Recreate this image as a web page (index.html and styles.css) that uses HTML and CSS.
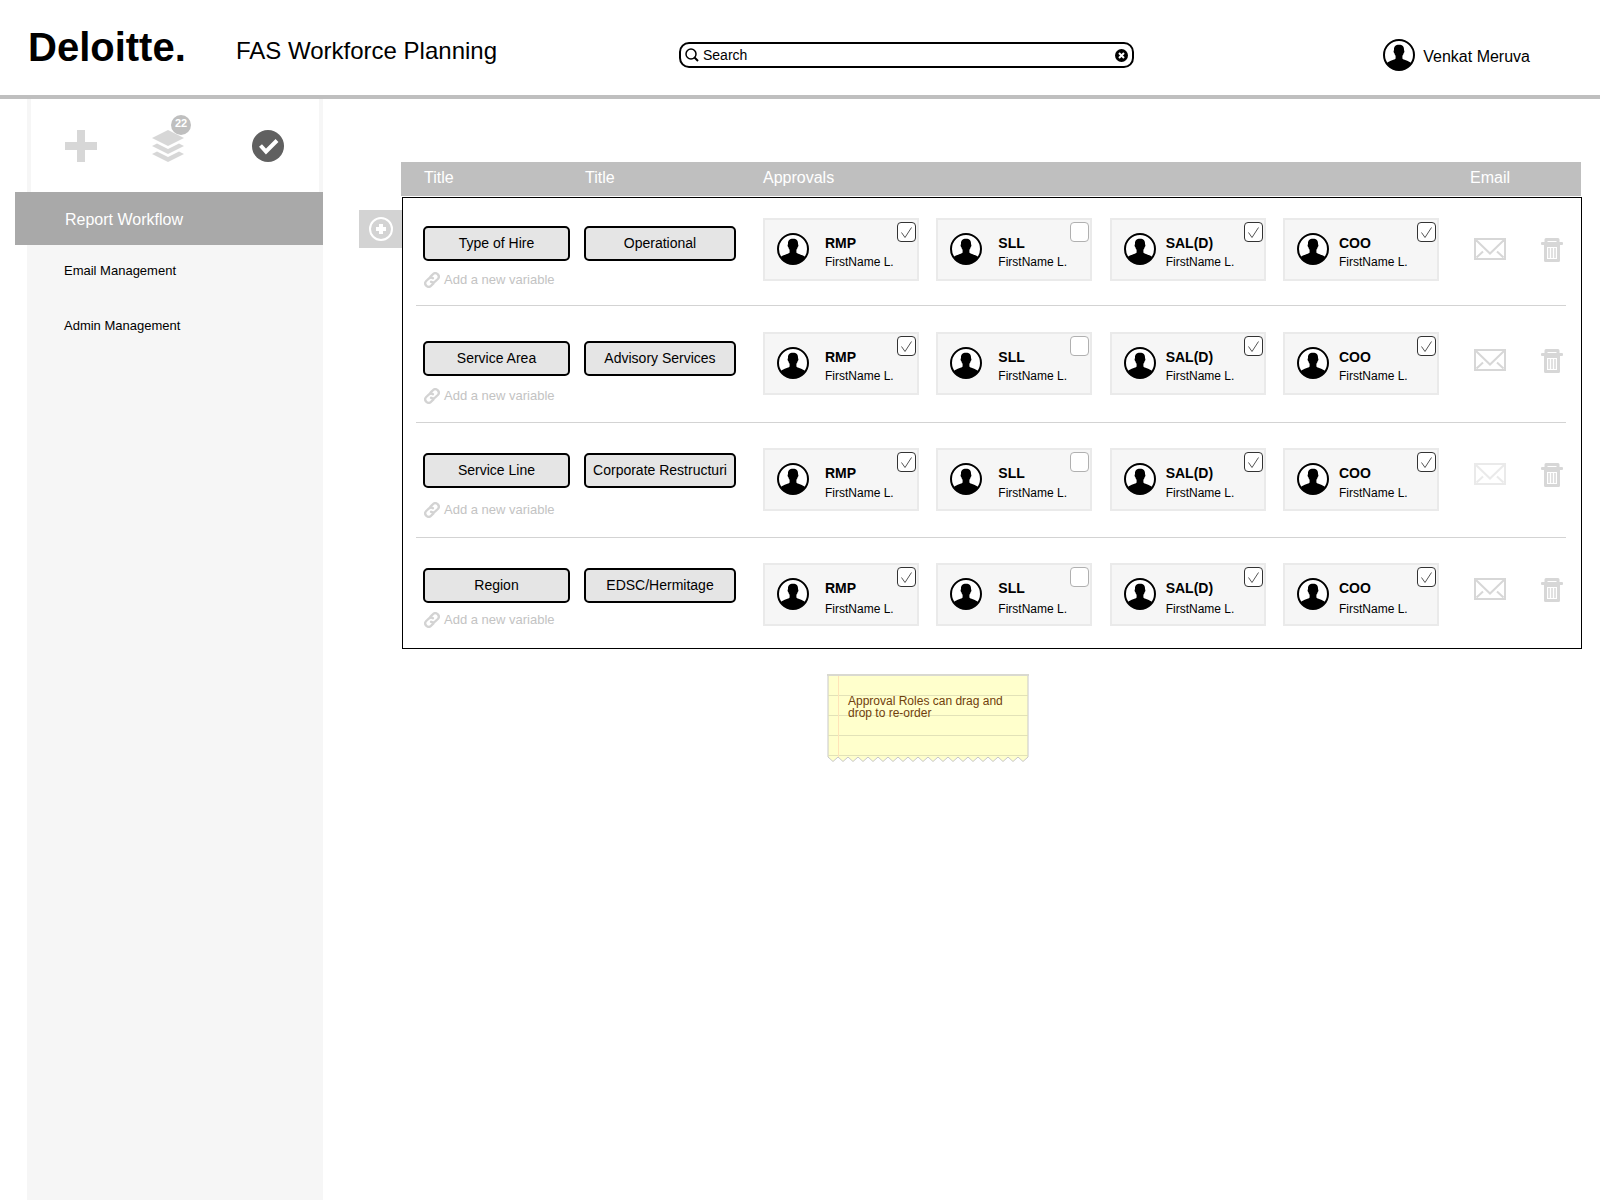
FILE: index.html
```html
<!DOCTYPE html>
<html lang="en">
<head>
<meta charset="utf-8">
<title>FAS Workforce Planning</title>
<link rel="stylesheet" href="styles.css">
</head>
<body>
<svg class="sprite" aria-hidden="true">
  <symbol id="avatar" viewBox="0 0 32 32">
    <circle cx="16" cy="16" r="15" fill="#fff" stroke="#000" stroke-width="2"/>
    <path d="M16 5.800c3.900 0 5.200 2 5 5.400.700.300.500 2.600-.400 3-.200 1.300-.700 2-1.200 2.600v2.600c.7 1.500 5.500 1.700 9.200 4.800A15 15 0 0 1 3.400 24.200c3.700-3.100 8.500-3.300 9.200-4.800v-2.600c-.500-.600-1-1.300-1.200-2.600-.900-.400-1.100-2.700-.400-3C10.800 7.800 12.100 5.800 16 5.800z"/>
  </symbol>
  <symbol id="mail" viewBox="0 0 32 22">
    <path d="M1 1h30v20H1zM2 2l14 13.500L30 2M2.500 19.500l6.500-6M29.500 19.500l-6.500-6" fill="none" stroke="currentColor" stroke-width="2"/>
  </symbol>
  <symbol id="trash" viewBox="0 0 22 24">
    <path d="M5 5V1.500h12V5" fill="none" stroke="currentColor" stroke-width="3" stroke-linejoin="round"/>
    <rect y="4" width="22" height="3" rx="1" fill="currentColor"/>
    <path d="M4.500 7v15.500h13V7" fill="none" stroke="currentColor" stroke-width="3" stroke-linejoin="round"/>
    <path d="M6 8h10" stroke="currentColor" stroke-width="2"/>
    <path d="M8 10v10M11 10v10M14 10v10" stroke="currentColor" stroke-width="1.500"/>
  </symbol>
  <symbol id="chain" viewBox="0 0 16 16">
    <g fill="none" stroke="currentColor" stroke-width="2.300" stroke-linecap="round" stroke-linejoin="round">
      <path d="M6.500 4.500l2.300-2.200c1.500-1.500 3.500-1.300 4.800-.200 1.500 1.500 1.500 3.500.200 4.900L11 9.600c-1.200 1-2.800 1-4 .200"/>
      <path d="M9.500 11.500l-2.300 2.200c-1.500 1.500-3.500 1.300-4.800.200C.9 12.400.9 10.400 2.200 9L5 6.400c1.200-1 2.800-1 4-.200"/>
    </g>
  </symbol>
</svg>

<header class="topbar">
  <div class="brand">Deloitte.</div>
  <h1 class="product">FAS Workforce Planning</h1>
  <form class="search">
    <svg class="search-icon" viewBox="0 0 14 14" aria-hidden="true"><circle cx="6" cy="6" r="5" fill="none" stroke="#000" stroke-width="1.500"/><path d="M9.500 9.500l3.500 3.500" stroke="#000" stroke-width="2"/></svg>
    <input class="search-input" type="text" value="Search" aria-label="Search">
    <button class="icon-button" type="button" aria-label="Clear search">
      <svg class="clear-icon" viewBox="0 0 13 13"><circle cx="6.500" cy="6.500" r="6.500"/><path d="M4 4l5 5M9 4l-5 5" stroke="#fff" stroke-width="2"/></svg>
    </button>
  </form>
  <div class="user"><svg class="avatar"><use href="#avatar"/></svg><span>Venkat Meruva</span></div>
</header>

<div class="layout">
  <aside class="sidebar">
    <div class="tools">
      <button class="icon-button" type="button" aria-label="Add"><svg class="tool-icon" viewBox="0 0 32 32"><path d="M12 0h8v12h12v8H20v12h-8V20H0v-8h12z" fill="currentColor"/></svg></button>
      <button class="icon-button" type="button" aria-label="Layers">
        <svg class="tool-icon" viewBox="0 0 32 32"><path d="M16 0l16 8-16 8L0 8zM0 16l5-2.500 11 5.500 11-5.500 5 2.500-16 8zM0 24l5-2.500L16 27l11-5.500 5 2.500-16 8z" fill="currentColor"/></svg>
        <span class="badge">22</span>
      </button>
      <button class="icon-button" type="button" aria-label="Approve"><svg class="tool-icon" viewBox="0 0 32 32"><circle cx="16" cy="16" r="16" fill="#606060"/><path d="M8.500 15.500l5.500 6L25 10.500" fill="none" stroke="#fff" stroke-width="4" stroke-linejoin="miter"/></svg></button>
    </div>
    <nav class="menu">
      <a class="menu-link menu-link-active" href="#">Report Workflow</a>
      <a class="menu-link" href="#">Email Management</a>
      <a class="menu-link" href="#">Admin Management</a>
    </nav>
  </aside>

  <main class="content">
    <button class="add-row" type="button" aria-label="Add row"><svg class="add-icon" viewBox="0 0 24 24"><circle cx="12" cy="12" r="11" fill="none" stroke="#fff" stroke-width="2"/><path d="M12 7v10M7 12h10" stroke="#fff" stroke-width="4"/></svg></button>
    <div class="board">
      <table class="workflow">
        <thead class="head">
          <tr class="head-row"><th>Title</th><th>Title</th><th>Approvals</th><th>Email</th></tr>
        </thead>
        <tbody class="rows" id="rows"></tbody>
      </table>
      <div class="note">
        <svg class="note-paper" viewBox="0 0 202 88" aria-hidden="true">
          <path d="M1 1H201V83l-5 4.500l-5-4.500l-5 4.500l-5-4.500l-5 4.500l-5-4.500l-5 4.500l-5-4.500l-5 4.500l-5-4.500l-5 4.500l-5-4.500l-5 4.500l-5-4.500l-5 4.500l-5-4.500l-5 4.500l-5-4.500l-5 4.500l-5-4.500l-5 4.500l-5-4.500l-5 4.500l-5-4.500l-5 4.500l-5-4.500l-5 4.500l-5-4.500l-5 4.500l-5-4.500l-5 4.500l-5-4.500l-5 4.500l-5-4.500l-5 4.500l-5-4.500l-5 4.500l-5-4.500l-5 4.500l-5-4.500z" fill="#ffffcc" stroke="#c8c8c8"/>
          <path d="M1 21.500h200M1 41.500h200M1 61.500h200M1 81.500h200" stroke="#e2e2b8"/>
          <path d="M11.500 2v81" stroke="#ffe3b8"/>
          <path d="M0 1h202" stroke="#d9d9d0" stroke-width="2"/>
        </svg>
        <p class="note-text">Approval Roles can drag and drop to re-order</p>
      </div>
    </div>
  </main>
</div>
<script src="rows.js"></script>
</body>
</html>
```
FILE: styles.css
```css
* { box-sizing: border-box; }

body {
  margin: 0;
  background: #fff;
  color: #000;
  font-family: "Liberation Sans", Arial, sans-serif;
  font-size: 14px;
}

button { font-family: inherit; color: inherit; cursor: pointer; }

svg { display: block; flex: none; }

.sprite { position: absolute; width: 0; height: 0; }

.icon-button { display: block; padding: 0; border: 0; background: none; }

.avatar { width: 32px; height: 32px; }

/* Top bar */
.topbar {
  display: grid;
  grid-template-columns: 208px 443px minmax(200px, 455px) 1fr;
  align-items: start;
  height: 99px;
  padding: 0 70px 0 28px;
  border-bottom: 4px solid #bfbfbf;
}

.brand { padding-top: 24px; font-size: 40px; line-height: 46px; font-weight: bold; }

.product { margin: 0; padding-top: 37px; font-size: 24px; line-height: 28px; font-weight: normal; }

.search {
  display: flex;
  align-items: center;
  height: 26px;
  margin: 42px 0 0;
  padding: 0 4px;
  border: 2px solid #000;
  border-radius: 10px;
}

.search-icon { width: 14px; height: 14px; }

.search-input {
  flex: 1;
  min-width: 0;
  padding: 0 4px;
  border: 0;
  outline: 0;
  background: none;
  font: 14px/18px "Liberation Sans", Arial, sans-serif;
  color: #000;
}

.clear-icon { width: 13px; height: 13px; }

.user {
  display: flex;
  align-items: flex-start;
  justify-content: flex-end;
  gap: 8px;
  padding-top: 39px;
  font-size: 16px;
  line-height: 36px;
}

/* Sidebar */
.layout { display: flex; min-height: calc(100vh - 99px); }

.sidebar { flex: none; width: 296px; margin-left: 27px; background: #f6f6f6; }

.tools {
  display: grid;
  grid-template-columns: 87px 100px 32px;
  align-items: start;
  height: 93px;
  margin: 0 4px;
  padding: 31px 0 0 34px;
  background: #fff;
}

.tools .icon-button { position: relative; width: 32px; color: #d7d7d7; }

.tool-icon { width: 32px; height: 32px; }

.badge {
  position: absolute;
  top: -15px;
  left: 19px;
  width: 20px;
  height: 20px;
  border-radius: 50%;
  background: #bfbfbf;
  color: #fff;
  font-size: 11px;
  line-height: 17px;
  font-weight: bold;
  text-align: center;
}

.menu-link {
  display: block;
  padding-left: 37px;
  color: #000;
  font-size: 13px;
  line-height: 55px;
  text-decoration: none;
}

.menu-link-active {
  margin: 0 0 -2px -12px;
  padding: 2px 0 0 50px;
  background: #a9a9a9;
  color: #fff;
  font-size: 16px;
  line-height: 51px;
}

/* Workflow table */
.content {
  display: flex;
  flex: 1;
  align-items: flex-start;
  min-width: 0;
  padding: 63px 18px 0 36px;
}

.add-row {
  display: flex;
  flex: none;
  align-items: center;
  justify-content: center;
  width: 43px;
  height: 38px;
  margin: 48px -1px 0 0;
  padding: 0;
  border: 0;
  background: #d3d3d3;
}

.add-icon { width: 24px; height: 24px; }

.board { flex: 1; min-width: 0; }

.workflow, .head, .rows { display: block; }

.head { margin-right: 1px; background: #bfbfbf; }

.head-row {
  display: grid;
  grid-template-columns: 161px 178px 1fr 111px;
  padding-left: 23px;
}

.head-row th {
  padding: 1px 0 3px;
  color: #fff;
  font-size: 16px;
  line-height: 30px;
  font-weight: normal;
  text-align: left;
}

.rows { margin: 1px 0 0 1px; border: 1px solid #000; }

.row {
  display: grid;
  grid-template-columns: 161px 179px 1fr 102px 25px;
  height: var(--row-height);
  margin: 0 15px 0 13px;
  padding-left: 7px;
  border-bottom: 1px solid #d3d3d3;
}

.row:last-child { border-bottom: 0; }

.row td { padding: 0; }

.row-first { --row-height: 108px; --tag-top: 28px; --card-top: 20px; --action-top: 40px; --link-gap: 11px; --name-gap: 4px; }
.row-second { --row-height: 117px; --tag-top: 35px; --card-top: 26px; --action-top: 43px; --link-gap: 12px; --name-gap: 4px; }
.row-third { --row-height: 115px; --tag-top: 30px; --card-top: 25px; --action-top: 40px; --link-gap: 14px; --name-gap: 5px; }
.row-fourth { --row-height: 110px; --tag-top: 30px; --card-top: 25px; --action-top: 40px; --link-gap: 9px; --name-gap: 6px; }

.row .tag-cell { padding-top: var(--tag-top); }

.tag {
  display: block;
  width: 152px;
  height: 35px;
  padding: 0 0 2px;
  border: 2px solid #000;
  border-radius: 5px;
  background: #e5e5e5;
  font-size: 14px;
  line-height: 16px;
  white-space: nowrap;
}

.tag-variable { width: 147px; }

.add-variable {
  display: flex;
  align-items: center;
  gap: 4px;
  margin-top: var(--link-gap);
  padding-left: 1px;
  color: #c3c3c3;
  font-size: 13px;
  line-height: 16px;
  text-decoration: none;
}

.chain { width: 16px; height: 16px; color: #d3d3d3; }

.row .approvals {
  display: flex;
  align-items: flex-start;
  justify-content: space-between;
  padding-top: var(--card-top);
}

.card {
  display: flex;
  position: relative;
  gap: 16px;
  width: 156px;
  height: 63px;
  padding: 13px 0 0 12px;
  border: 2px solid #eaeaea;
  background: #f6f6f6;
}

.card-tight { gap: 10px; }

.person { display: flex; flex-direction: column; gap: var(--name-gap); padding-top: 2px; }

.role { font-size: 14px; line-height: 16px; font-weight: bold; }

.name { font-size: 12px; line-height: 14px; }

.check {
  appearance: none;
  position: absolute;
  top: 2px;
  right: 1px;
  width: 19px;
  height: 20px;
  margin: 0;
  border: 1px solid #b0b0b0;
  border-radius: 4px;
  background: #fff;
}

.check:checked {
  border-color: #333;
  background: #fff url("data:image/svg+xml,%3Csvg xmlns='http://www.w3.org/2000/svg' viewBox='0 0 17 18'%3E%3Cpath d='M3.500 9.500l3.500 5L13.500 4.500' fill='none' stroke='%23555'/%3E%3C/svg%3E") center / 17px 18px no-repeat;
}

.row .action { padding-top: var(--action-top); color: #d7d7d7; }

.row .email { padding-left: 35px; }

.muted { opacity: 0.5; }

.mail { width: 32px; height: 22px; }

.trash { width: 22px; height: 24px; }

/* Sticky note */
.note {
  position: relative;
  width: 202px;
  height: 88px;
  margin: 25px 0 0 426px;
  padding: 21px 20px 0 21px;
}

.note-paper { position: absolute; inset: 0; width: 202px; height: 88px; }

.note-text { position: relative; margin: 0; color: #70400c; font-size: 12px; line-height: 12px; }
```
FILE: rows.js
```js
const rows = [
  { style: "row-first", variable: "Type of Hire", value: "Operational", emailed: true },
  { style: "row-second", variable: "Service Area", value: "Advisory Services", emailed: true },
  { style: "row-third", variable: "Service Line", value: "Corporate Restructuri", emailed: false },
  { style: "row-fourth", variable: "Region", value: "EDSC/Hermitage", emailed: true }
];

const roles = [
  { role: "RMP", approved: true },
  { role: "SLL", approved: false },
  { role: "SAL(D)", approved: true, tight: true },
  { role: "COO", approved: true, tight: true }
];

const card = (r, i) => `
  <label class="card ${r.tight ? "card-tight" : ""}">
    <svg class="avatar"><use href="#avatar"/></svg>
    <span class="person"><span class="role">${r.role}</span><span class="name">FirstName L.</span></span>
    <input class="check" type="checkbox" name="approval-${i}" ${r.approved ? "checked" : ""}>
  </label>`;

document.getElementById("rows").innerHTML = rows.map((row, i) => `
  <tr class="row ${row.style}">
    <td class="tag-cell">
      <button class="tag tag-variable" type="button">${row.variable}</button>
      <a class="add-variable" href="#"><svg class="chain"><use href="#chain"/></svg>Add a new variable</a>
    </td>
    <td class="tag-cell"><button class="tag" type="button">${row.value}</button></td>
    <td class="approvals">${roles.map(r => card(r, i)).join("")}</td>
    <td class="action email"><button class="icon-button ${row.emailed ? "" : "muted"}" type="button" aria-label="Email"><svg class="mail"><use href="#mail"/></svg></button></td>
    <td class="action"><button class="icon-button" type="button" aria-label="Delete"><svg class="trash"><use href="#trash"/></svg></button></td>
  </tr>`).join("");
```
